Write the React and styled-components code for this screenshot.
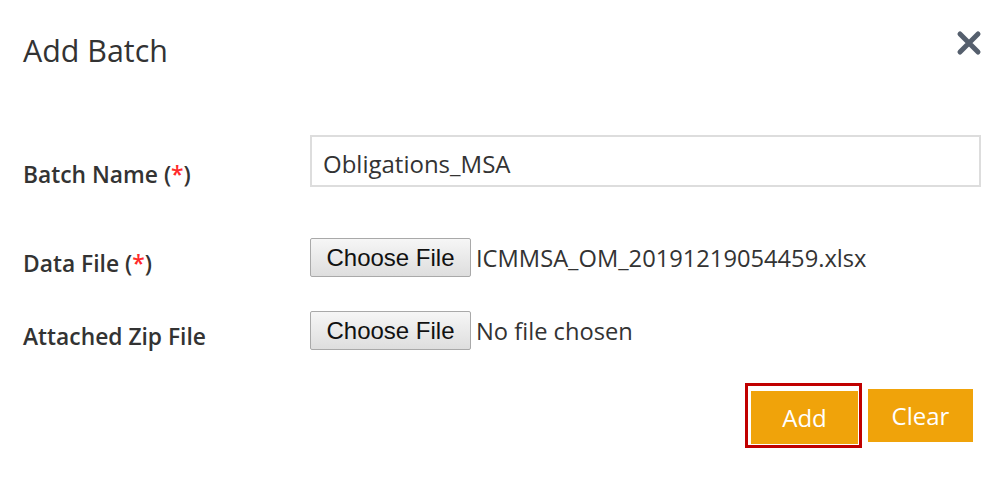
import React from 'react'
import styled, { createGlobalStyle } from 'styled-components'

const GlobalStyle = createGlobalStyle`
  html, body {
    margin: 0;
    padding: 0;
    background: #ffffff;
  }
  body {
    font-family: "Open Sans", "Noto Sans", sans-serif;
    color: #333333;
  }
`;

const Modal = styled.div`
  width: 998px;
  height: 480px;
  box-sizing: border-box;
  padding: 0 17px 0 23px;
  display: flex;
  flex-direction: column;
`;

const Header = styled.div`
  display: flex;
  justify-content: space-between;
  align-items: flex-start;
  height: 135px;
`;

const Title = styled.h2`
  margin: 31px 0 0;
  font-size: 30.4px;
  font-weight: 400;
  line-height: 40px;
  color: #333333;
`;

const Close = styled.button`
  margin-top: 29px;
  margin-right: -2px;
  width: 28px;
  height: 28px;
  padding: 0;
  border: none;
  background: transparent;
  display: flex;
  align-items: center;
  justify-content: center;
  cursor: pointer;
`;

const Row = styled.div`
  display: grid;
  grid-template-columns: 287px 671px;
  align-items: start;
  margin-bottom: ${p => p.$gap}px;
`;

const Label = styled.label`
  font-size: 22.8px;
  font-weight: 600;
  line-height: 28px;
  color: #333333;
  padding-top: ${p => p.$top}px;
  white-space: nowrap;
`;

const Req = styled.span`
  color: #ff2a2a;
`;

const TextInput = styled.input`
  box-sizing: border-box;
  width: 671px;
  height: 52px;
  border: 2px solid #dddddd;
  padding: 5px 11px 0;
  font-family: "Open Sans", "Noto Sans", sans-serif;
  font-size: 24px;
  color: #333333;
  outline: none;
`;

const FileField = styled.div`
  display: flex;
  align-items: center;
  gap: 5px;
`;

const ChooseButton = styled.span`
  box-sizing: border-box;
  width: 161px;
  height: 39px;
  display: flex;
  align-items: center;
  justify-content: center;
  border: 1px solid #a9a9a9;
  border-radius: 2px;
  background: linear-gradient(#f6f6f6, #dedede);
  font-family: "Liberation Sans", Arial, sans-serif;
  font-size: 24px;
  color: #111111;
`;

const FileName = styled.span`
  font-size: 23.7px;
  color: #333333;
`;

const Actions = styled.div`
  display: flex;
  justify-content: flex-end;
  align-items: center;
  gap: 6px;
  padding-right: 8px;
`;

const Focus = styled.div`
  border: 3px solid #c00000;
  padding: 5px 1px 1px 3px;
`;

const ActionButton = styled.button`
  box-sizing: border-box;
  width: ${p => p.$w}px;
  height: 53px;
  border: none;
  background: #f0a30a;
  color: #ffffff;
  font-family: "Open Sans", "Noto Sans", sans-serif;
  font-size: 24px;
  display: flex;
  align-items: center;
  justify-content: center;
  padding: 0;
  cursor: pointer;
`;

export default function App() {
  return (
    <>
      <GlobalStyle />
      <Modal>
        <Header>
          <Title>Add Batch</Title>
          <Close aria-label="close">
            <svg width="26" height="26" viewBox="0 0 26 26">
              <path d="M4 4 L22 22 M22 4 L4 22" stroke="#555f6d" strokeWidth="5" strokeLinecap="round" />
            </svg>
          </Close>
        </Header>

        <Row $gap={49}>
          <Label $top={26}>Batch Name (<Req>*</Req>)</Label>
          <TextInput defaultValue="Obligations_MSA" />
        </Row>

        <Row $gap={33}>
          <Label $top={12}>Data File (<Req>*</Req>)</Label>
          <FileField>
            <ChooseButton>Choose File</ChooseButton>
            <FileName>ICMMSA_OM_20191219054459.xlsx</FileName>
          </FileField>
        </Row>

        <Row $gap={32}>
          <Label $top={12}>Attached Zip File</Label>
          <FileField>
            <ChooseButton>Choose File</ChooseButton>
            <FileName>No file chosen</FileName>
          </FileField>
        </Row>

        <Actions>
          <Focus>
            <ActionButton $w={107}>Add</ActionButton>
          </Focus>
          <ActionButton $w={105}>Clear</ActionButton>
        </Actions>
      </Modal>
    </>
  )
}
